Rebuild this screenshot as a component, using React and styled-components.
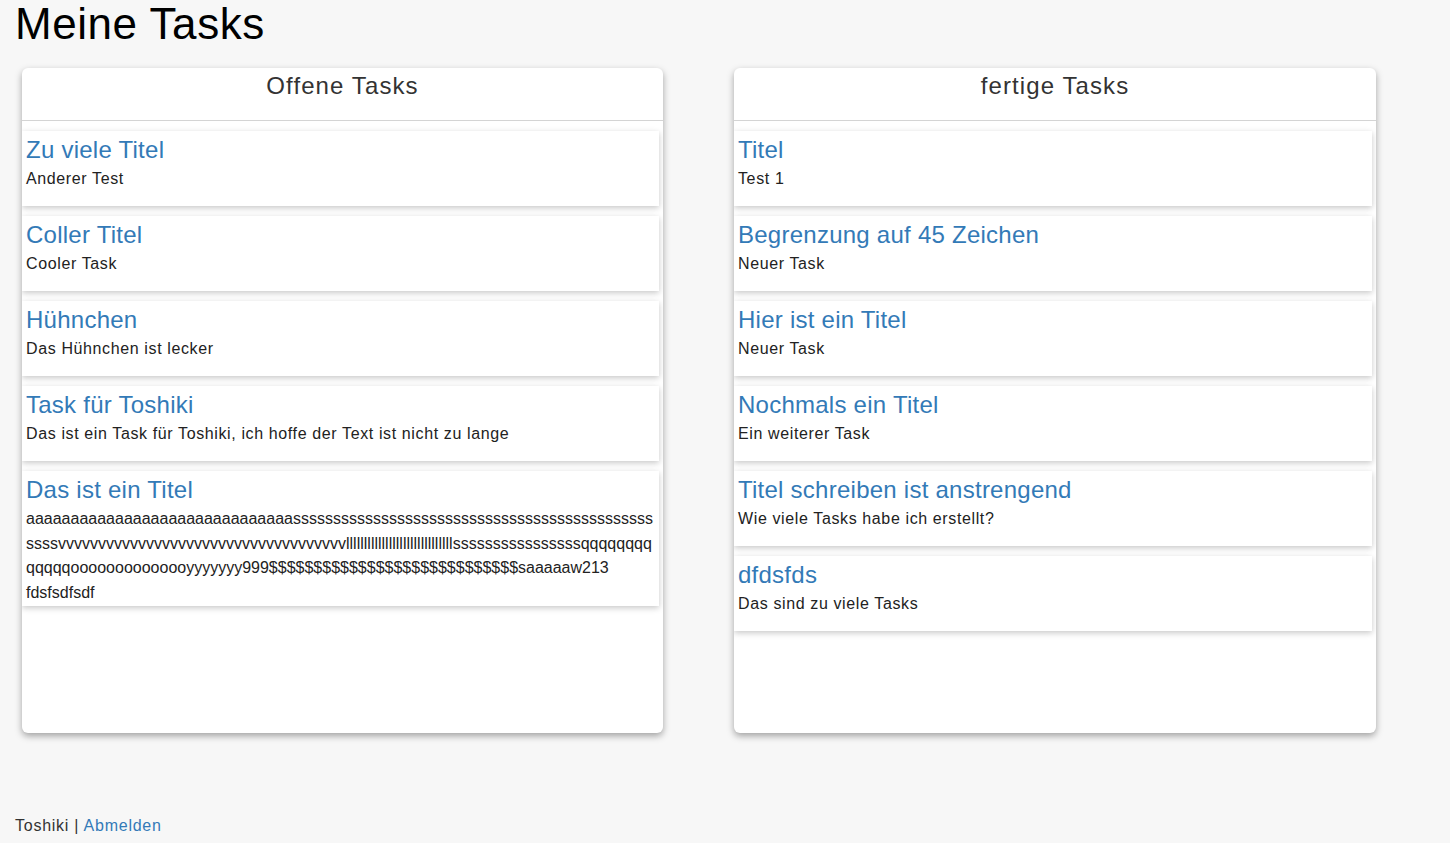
import React from "react";
import styled, { createGlobalStyle } from "styled-components";

const GlobalStyle = createGlobalStyle`
  html, body {
    margin: 0;
    padding: 0;
    background: #f7f7f7;
  }
  body {
    font-family: "Liberation Sans", Arial, Helvetica, sans-serif;
    font-size: 16px;
    line-height: 24.6px;
    color: #333;
  }
  * { box-sizing: border-box; }
`;

const Page = styled.div`
  min-height: 843px;
  display: flex;
  flex-direction: column;
`;

const Heading = styled.h1`
  margin: 0 0 0 15px;
  font-size: 44px;
  font-weight: 400;
  line-height: 48.4px;
  letter-spacing: 0.55px;
  color: #000;
`;

const Board = styled.div`
  display: grid;
  grid-template-columns: 641px 642px;
  column-gap: 71px;
  padding: 0 22px;
  margin-top: 19.6px;
`;

const Panel = styled.section`
  height: 665px;
  background: #fff;
  border-radius: 6px;
  box-shadow: 0 3px 7px rgba(0, 0, 0, 0.35);
  display: flex;
  flex-direction: column;
  overflow: hidden;
`;

const PanelHeader = styled.header`
  height: 53px;
  padding-top: 4.5px;
  border-bottom: 1px solid #d4d4d4;
  text-align: center;
  font-size: 24px;
  line-height: 26.4px;
  letter-spacing: 1.1px;
  color: #333;
`;

const List = styled.div`
  display: flex;
  flex-direction: column;
  gap: 10px;
  padding: 10px 4px 0 0;
`;

const Card = styled.article`
  min-height: 75px;
  background: #fff;
  padding: 6px 4px 0.5px;
  box-shadow: 0 2px 6px rgba(0, 0, 0, 0.22);
`;

const CardTitle = styled.a`
  display: block;
  font-size: 24px;
  line-height: 26.4px;
  letter-spacing: 0.25px;
  color: #337ab7;
  text-decoration: none;
  margin-bottom: 3.8px;
`;

const CardText = styled.div`
  font-size: 16px;
  line-height: 24.6px;
  letter-spacing: ${(p) => (p.$dense ? "0" : "0.62px")};
  color: #222;
  overflow-wrap: break-word;
  word-wrap: break-word;
`;

const Footer = styled.footer`
  margin: 81px 0 0 15px;
  font-size: 16px;
  line-height: 24.6px;
  letter-spacing: 0.75px;
  color: #333;
`;

const FooterLink = styled.a`
  color: #337ab7;
  text-decoration: none;
`;

const longText =
  "a".repeat(30) +
  "s".repeat(49) +
  "v".repeat(36) +
  "l".repeat(30) +
  "s".repeat(16) +
  "q".repeat(13) +
  "o".repeat(13) +
  "y".repeat(7) +
  "999" +
  "$".repeat(28) +
  "saaaaaw213 fdsfsdfsdf";

const openTasks = [
  { title: "Zu viele Titel", text: "Anderer Test" },
  { title: "Coller Titel", text: "Cooler Task" },
  { title: "Hühnchen", text: "Das Hühnchen ist lecker" },
  {
    title: "Task für Toshiki",
    text: "Das ist ein Task für Toshiki, ich hoffe der Text ist nicht zu lange",
  },
  { title: "Das ist ein Titel", text: longText, dense: true },
];

const doneTasks = [
  { title: "Titel", text: "Test 1" },
  { title: "Begrenzung auf 45 Zeichen", text: "Neuer Task" },
  { title: "Hier ist ein Titel", text: "Neuer Task" },
  { title: "Nochmals ein Titel", text: "Ein weiterer Task" },
  { title: "Titel schreiben ist anstrengend", text: "Wie viele Tasks habe ich erstellt?" },
  { title: "dfdsfds", text: "Das sind zu viele Tasks" },
];

function TaskPanel({ heading, tasks }) {
  return (
    <Panel>
      <PanelHeader>{heading}</PanelHeader>
      <List>
        {tasks.map((t, i) => (
          <Card key={i}>
            <CardTitle href="#">{t.title}</CardTitle>
            <CardText $dense={t.dense}>{t.text}</CardText>
          </Card>
        ))}
      </List>
    </Panel>
  );
}

export default function App() {
  return (
    <>
      <GlobalStyle />
      <Page>
        <Heading>Meine Tasks</Heading>
        <Board>
          <TaskPanel heading="Offene Tasks" tasks={openTasks} />
          <TaskPanel heading="fertige Tasks" tasks={doneTasks} />
        </Board>
        <Footer>
          Toshiki | <FooterLink href="#">Abmelden</FooterLink>
        </Footer>
      </Page>
    </>
  );
}
